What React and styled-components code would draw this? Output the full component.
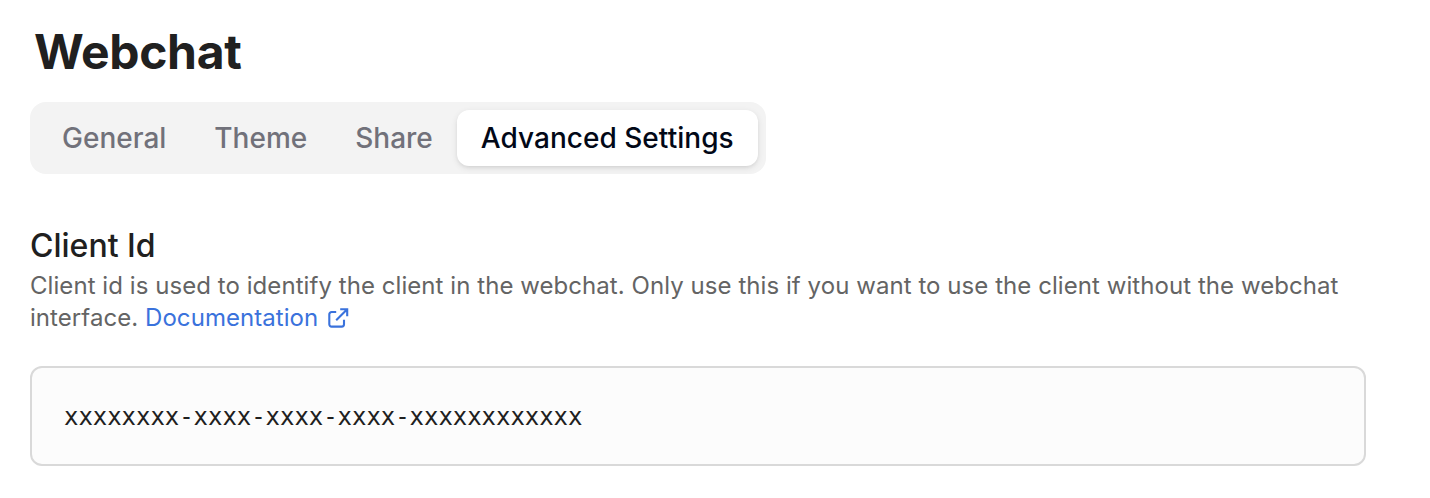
import React from "react";
import styled, { createGlobalStyle } from "styled-components";

const Global = createGlobalStyle`
  * { box-sizing: border-box; }
  body { margin: 0; background: #fff; font-family: Inter, "Liberation Sans", sans-serif; -webkit-font-smoothing: antialiased; }
`;
const Page = styled.main`
  height: 498px;
  padding: 24px 64px 0 30px;
  overflow: hidden;
`;
const Title = styled.h1`
  margin: 0 0 22px 4px;
  font-size: 48px;
  line-height: 56px;
  font-weight: 700;
  letter-spacing: -0.35px;
  color: #202020;
`;
const TabList = styled.nav`
  display: flex;
  width: 736px;
  height: 72px;
  padding: 8px;
  border-radius: 16px;
  background: #f3f3f3;
`;
const Tab = styled.button`
  flex: ${(p) => (p.$active ? "1 0 auto" : "none")};
  height: 56px;
  padding: 0 24px;
  border: 0;
  border-radius: 12px;
  font: 500 28px/40px Inter, "Liberation Sans", sans-serif;
  letter-spacing: ${(p) => (p.$active ? "0.03px" : "0")};
  text-align: left;
  white-space: nowrap;
  color: ${(p) => (p.$active ? "#020817" : "#71717a")};
  background: ${(p) => (p.$active ? "#fff" : "transparent")};
  box-shadow: ${(p) => (p.$active ? "0 2px 6px rgba(0,0,0,.1), 0 2px 4px -2px rgba(0,0,0,.1)" : "none")};
`;
const Section = styled.section`
  margin-top: 48px;
`;
const Label = styled.h2`
  margin: 0;
  font-size: 32px;
  line-height: 48px;
  font-weight: 500;
  color: #202020;
`;
const Description = styled.p`
  margin: 0;
  font-size: 24px;
  line-height: 32px;
  letter-spacing: 0.06px;
  color: #646464;
`;
const DocLink = styled.a`
  display: inline-flex;
  align-items: center;
  gap: 10px;
  height: 32px;
  vertical-align: top;
  color: #3a72dc;
`;
const Field = styled.div`
  display: flex;
  align-items: center;
  height: 100px;
  margin-top: 32px;
  padding: 2px 32px 0;
  border: 2px solid #d9d9d9;
  border-radius: 12px;
  background: #fcfcfc;
  color: #202020;
  font: 24px/32px "DejaVu Sans Mono", monospace;
  letter-spacing: -0.05px;
`;

function ExternalIcon() {
  return (
    <svg width="21" height="20" viewBox="0 0 21 20" fill="none" stroke="currentColor" strokeWidth="2.1" strokeLinejoin="round">
      <path d="M8.2 4H3.6A2.3 2.3 0 0 0 1.3 6.3v10A2.3 2.3 0 0 0 3.6 18.6h10.1A2.3 2.3 0 0 0 16 16.3v-4.6" />
      <path d="M12.2 1.3h7v7M19.2 1.3 8.2 12.2" strokeLinejoin="miter" />
    </svg>
  );
}

const tabs = ["General", "Theme", "Share", "Advanced Settings"];

export default function App() {
  return (
    <Page>
      <Global />
      <Title>Webchat</Title>
      <TabList>
        {tabs.map((t) => <Tab key={t} $active={t === "Advanced Settings"}>{t}</Tab>)}
      </TabList>
      <Section>
        <Label>Client Id</Label>
        <Description>
          Client id is used to identify the client in the webchat. Only use this if you want to use the client without the webchat interface. <DocLink>Documentation<ExternalIcon /></DocLink>
        </Description>
        <Field>xxxxxxxx-xxxx-xxxx-xxxx-xxxxxxxxxxxx</Field>
      </Section>
    </Page>
  );
}
